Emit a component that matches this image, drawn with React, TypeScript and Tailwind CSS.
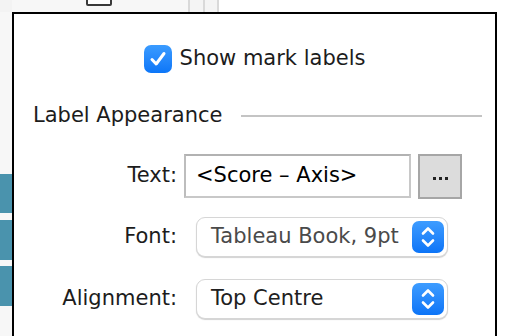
import React from 'react';

const font = { fontFamily: '"DejaVu Sans", "Liberation Sans", sans-serif' };

const Stepper: React.FC = () => (
  <div className="ml-auto mr-[3px] flex h-8 w-8 shrink-0 items-center justify-center rounded-[7px] bg-gradient-to-b from-[#3d9cff] to-[#0b74f7]">
    <svg width="16" height="24" viewBox="0 0 16 24" fill="none" stroke="white" strokeWidth="2.6" strokeLinecap="round" strokeLinejoin="round">
      <path d="M3 8.5 L8 3.5 L13 8.5" />
      <path d="M3 15.5 L8 20.5 L13 15.5" />
    </svg>
  </div>
);

const Select: React.FC<{ value: string; muted?: boolean }> = ({ value, muted }) => (
  <div className="ml-[19px] flex h-10 w-[252px] items-center rounded-[9px] border border-[#d6d6d6] bg-white pl-[14px] shadow-[0_1px_1px_rgba(0,0,0,0.18)]">
    <span className={muted ? 'whitespace-nowrap text-[21px] text-[#4a4a4a]' : 'whitespace-nowrap text-[21px] text-[#202020]'}>{value}</span>
    <Stepper />
  </div>
);

const Label: React.FC<{ children: React.ReactNode }> = ({ children }) => (
  <div className="w-[163px] shrink-0 text-right text-[21px] text-[#1c1c1c]">{children}</div>
);

export default function App() {
  return (
    <div className="flex h-[336px] w-[508px] flex-col overflow-hidden bg-white" style={font}>
      {/* strip above the popup */}
      <div className="flex h-3 shrink-0">
        <div className="w-3 bg-[#f3f3f3]" />
        <div className="relative w-[176px] bg-[#f7f7f7]">
          <div className="absolute left-[74px] top-[-20px] h-[26px] w-[26px] rounded-[2px] border-2 border-[#3a3a3a] bg-white" />
        </div>
        <div className="w-[2px] bg-[#d9d9d9]" />
        <div className="w-[13px] bg-[#f4f4f4]" />
        <div className="w-[2px] bg-[#d9d9d9]" />
        <div className="w-[12px] bg-[#f4f4f4]" />
        <div className="w-[2px] bg-[#d9d9d9]" />
        <div className="flex-1 bg-white" />
      </div>

      <div className="flex flex-1">
        {/* left column with tabs */}
        <div className="flex w-3 shrink-0 flex-col bg-[#f7f7f7] pt-[162px]">
          <div className="h-[39px] bg-[#4a93ad]" />
          <div className="mt-[7px] h-[40px] bg-[#4a93ad]" />
          <div className="mt-[6px] h-[40px] bg-[#4a93ad]" />
        </div>

        {/* popup */}
        <div className="mr-[11px] flex flex-1 flex-col border-l-2 border-r-2 border-t-2 border-black bg-white">
          <div className="mt-[29px] flex items-center justify-center">
            <div className="flex h-7 w-7 items-center justify-center rounded-[7px] bg-gradient-to-b from-[#3a9bff] to-[#0b76f8]">
              <svg width="20" height="20" viewBox="0 0 20 20" fill="none" stroke="white" strokeWidth="3" strokeLinecap="round" strokeLinejoin="round">
                <path d="M4 10.5 L8.2 15 L16 4.5" />
              </svg>
            </div>
            <span className="ml-2 text-[21px] text-[#1c1c1c]">Show mark labels</span>
          </div>

          <div className="mt-[29px] flex h-6 items-center pl-[19px] pr-[13px]">
            <span className="text-[21px] text-[#1c1c1c]">Label Appearance</span>
            <div className="ml-[19px] h-[2px] flex-1 bg-[#c4c4c4]" />
          </div>

          <div className="mt-[26px] flex items-center">
            <Label>Text:</Label>
            <div className="ml-[7px] flex h-[44px] w-[227px] items-center border-2 border-[#c8c8c8] border-l-[#bdbdbd] border-t-[#b2b2b2] pl-[10px]">
              <span className="whitespace-nowrap text-[21px] text-black">&lt;Score – Axis&gt;</span>
            </div>
            <div className="ml-[7px] flex h-[45px] w-[44px] items-center justify-center gap-[3px] border-2 border-[#a6a6a6] bg-[#dcdcdc] pt-[4px]">
              <span className="h-[3px] w-[3px] bg-[#222]" />
              <span className="h-[3px] w-[3px] bg-[#222]" />
              <span className="h-[3px] w-[3px] bg-[#222]" />
            </div>
          </div>

          <div className="mt-[18px] flex items-center">
            <Label>Font:</Label>
            <Select value="Tableau Book, 9pt" muted />
          </div>

          <div className="mt-[22px] flex items-center">
            <Label>Alignment:</Label>
            <Select value="Top Centre" />
          </div>
        </div>
      </div>
    </div>
  );
}
